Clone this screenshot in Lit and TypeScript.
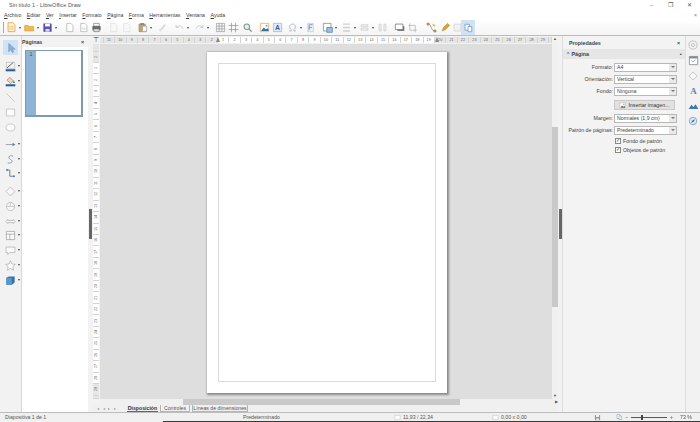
import { LitElement, html, css, svg } from "lit";
import { customElement } from "lit/decorators.js";

const O = "#e8a33d";

const ic: Record<string, any> = {
  new: svg`<path d="M3 1h7l3 3v10H3z" fill="#fdf3e0" stroke="${O}" stroke-width="1.2"/><path d="M5 7h6M5 10h6" stroke="${O}"/>`,
  open: svg`<path d="M1 5h5l1 1.500h7V13H1z" fill="#eeb95b" stroke="#d9a03f"/>`,
  save: svg`<path d="M2 2h11l1 1v11H2z" fill="#5a4fa8"/><path d="M4.500 2.500h7v4h-7z" fill="#fff"/><path d="M5 10h6v4H5z" fill="#d9d6ee"/>`,
  disk: svg`<path d="M2 2h11l1 1v11H2z" fill="#999"/><path d="M4.500 2.500h7v4h-7z" fill="#fff"/><path d="M5 10h6v4H5z" fill="#eee"/>`,
  doc: svg`<path d="M4 2h6l3 3v9H4z" fill="#fff" stroke="#aaa"/>`,
  doc2: svg`<path d="M4 2h6l3 3v9H4z" fill="#fff" stroke="#aaa"/><path d="M6 8h5v3H6z" fill="#ddd"/>`,
  print: svg`<path d="M4 2h8v4H4z" fill="#fff" stroke="#777"/><path d="M2 6h12v6H2z" fill="#666"/><path d="M4 10h8v4H4z" fill="#ddd" stroke="#777"/>`,
  faint: svg`<path d="M4 2h6l3 3v9H4z" fill="#f8f8f8" stroke="#ddd"/>`,
  paste: svg`<path d="M3 3h9v11H3z" fill="#c9a263" stroke="#a8854d"/><path d="M8 6h6v8H8z" fill="#fff" stroke="#999"/><path d="M5 1.500h5v3H5z" fill="#888"/>`,
  brush: svg`<path d="M4 13l8-9" stroke="#ddd" stroke-width="3"/>`,
  undo: svg`<path d="M3 4v4h4M3.500 8c3-4 8-3 9.500 2" fill="none" stroke="#c5cdd6" stroke-width="1.300"/>`,
  redo: svg`<path d="M13 4v4H9M12.500 8c-3-4-8-3-9.500 2" fill="none" stroke="#c5cdd6" stroke-width="1.300"/>`,
  grid: svg`<path d="M2 2h12v12H2zM6 2v12M10 2v12M2 6h12M2 10h12" fill="#f4f4f4" stroke="#888" stroke-width=".8"/>`,
  hash: svg`<path d="M5 1v14M11 1v14M1 5h14M1 11h14" fill="none" stroke="#8a8a8a"/>`,
  zoom: svg`<circle cx="7" cy="7" r="4" fill="#e4eef2" stroke="#7f9a8f" stroke-width="1.500"/><path d="M10 10l4 4" stroke="#888" stroke-width="2"/>`,
  image: svg`<path d="M2 2h12v12H2z" fill="#fff" stroke="${O}"/><path d="M3 13l4-5 3 3 2-2 2 2v2H3z" fill="#2f6fae"/><circle cx="11" cy="5.500" r="1.500" fill="#79a8d0"/>`,
  text: svg`<path d="M2 2h12v12H2z" fill="#e4ebf6" stroke="#9bb0cf"/><text x="8" y="12" text-anchor="middle" font-size="10" font-family="Liberation Sans" fill="#2f5da0" font-weight="bold">A</text>`,
  omega: svg`<path d="M3 13h3v-2c-4-3-2-8 2-8s6 5 2 8v2h3" fill="none" stroke="#a9b4be" stroke-width="1.300"/>`,
  font: svg`<path d="M4 2h8v12H4z" fill="#eef2f8" stroke="#b8c6da"/><path d="M6 4h5M6 4v8M6 8h4" stroke="#6d8cb8" stroke-width="1.300" fill="none"/>`,
  transform: svg`<path d="M2 2h11v11H2z" fill="#fff" stroke="#777"/><path d="M7 8h8v7H7z" fill="#9cc0e0" stroke="#3e76ad"/>`,
  align: svg`<path d="M3 3h10M3 8h10M3 13h10" stroke="#d0d0d0" stroke-width="2"/>`,
  arrange: svg`<path d="M3 4h10v3H3zM3 9h10v3H3z" fill="#eee" stroke="#ccc"/>`,
  dist: svg`<path d="M3 3h3v10H3zM10 3h3v10h-3z" fill="#eee" stroke="#ccc"/>`,
  shadow: svg`<path d="M5 6h10v7H5z" fill="#777"/><path d="M2 3h11v8H2z" fill="#fff" stroke="#666"/>`,
  crop: svg`<path d="M4 2v10h10M2 5h10v10" fill="none" stroke="#bbb" stroke-width="1.300"/>`,
  points: svg`<path d="M3 3c6 0 3 10 10 10" fill="none" stroke="#777"/><path d="M1.500 1.500h3v3h-3zM11.500 11.500h3v3h-3z" fill="#e5b13f" stroke="#555" stroke-width=".6"/><path d="M11 2l3 3-2 2-3-3z" fill="#e0c27a"/>`,
  glue: svg`<path d="M3 13l2-5 6-6 3 3-6 6z" fill="#e0a02e" stroke="#b67f1c" stroke-width=".7"/>`,
  extr: svg`<path d="M3 3h10v10H3z" fill="#f2f2f2" stroke="#ccc"/>`,
  active: svg`<path d="M4 3h6v8H4z" fill="#fff" stroke="#6b93bd"/><path d="M8 6h5v7H8z" fill="#fff" stroke="#6b93bd"/>`,
  select: svg`<path d="M5 2v11l3-3 2 4 1.500-.8-2-3.700h4z" fill="#8fb3d6" stroke="#5f8ab5" stroke-width=".7"/>`,
  lineColor: svg`<path d="M3 10l9-8" stroke="#555" stroke-width="1.300"/><path d="M2 2h12v9H2z" fill="none" stroke="#999" stroke-width=".6"/><path d="M1 12h14v3H1z" fill="#1f5fa5"/>`,
  fill: svg`<path d="M7 2l5 5-4 4-5-5z" fill="#f3d9b0" stroke="#a67"/><path d="M13 6l1.500 4h-3z" fill="#3e8a5a"/><path d="M1 12h14v3H1z" fill="#1f5fa5"/>`,
  line: svg`<path d="M2 2l12 12" stroke="#c0c0c0" stroke-width="1.200"/>`,
  rect: svg`<path d="M2 3h12v10H2z" fill="#fdfdfd" stroke="#b5b5b5"/>`,
  ellipse: svg`<ellipse cx="8" cy="8" rx="6.500" ry="5" fill="#fdfdfd" stroke="#b5b5b5"/>`,
  arrow: svg`<path d="M1 8h11" stroke="#8b98aa" stroke-width="1.200"/><path d="M11 5.500l4 2.500-4 2.500z" fill="#5a7fae"/>`,
  curve: svg`<path d="M12 3c-7-2-8 3-4 5s3 6-4 5" fill="none" stroke="#7c98b8" stroke-width="1.300"/>`,
  conn: svg`<path d="M3 3h4v9h6" fill="none" stroke="#666" stroke-width="1.200"/><circle cx="3" cy="3" r="1.500" fill="#5a7fae"/><circle cx="13" cy="12" r="1.500" fill="#5a7fae"/>`,
  diamond: svg`<path d="M8 1.500l6.500 6.500L8 14.500 1.500 8z" fill="#f7f7f7" stroke="#aaa"/>`,
  symbol: svg`<circle cx="8" cy="8" r="6" fill="#f7f7f7" stroke="#aaa"/><path d="M3 8h10M8 3v5" stroke="#bbb"/>`,
  blockArrow: svg`<path d="M1 8l3-3v1.500h8V5l3 3-3 3V9.500H4V11z" fill="#f7f7f7" stroke="#aaa"/>`,
  flow: svg`<path d="M2 2h12v12H2zM2 6h12M7 6v8" fill="#fafafa" stroke="#999"/>`,
  callout: svg`<path d="M1.500 3h13v8H7l-3 3v-3H1.500z" fill="#fafafa" stroke="#aaa"/>`,
  star: svg`<path d="M8 1l2.200 4.800 5 .6-3.700 3.400 1 5L8 12.300 3.500 14.800l1-5L.8 6.400l5-.6z" fill="#fafafa" stroke="#aaa"/>`,
  cube: svg`<path d="M2 4l4-2h8v9l-4 3H2z" fill="#3270ab"/><path d="M2 4h8v10H2z" fill="#5b96cc"/>`,
  gear: svg`<circle cx="8" cy="8" r="6.500" fill="none" stroke="#aaa"/><circle cx="8" cy="8" r="2.500" fill="none" stroke="#aaa"/>`,
  props: svg`<path d="M2 2h12v12H2z" fill="#fff" stroke="#777"/><path d="M2 2h12v3H2z" fill="#888"/><path d="M5 8l2 2 4-3" fill="none" stroke="#5c8fc2"/>`,
  tabA: svg`<text x="8" y="13" text-anchor="middle" font-size="13" font-family="Liberation Serif" font-weight="bold" fill="#5d7fa8">A</text>`,
  tabImg: svg`<path d="M1 13l4-6 3 3 3-4 4 7z" fill="#3f79b0"/>`,
  tabNav: svg`<circle cx="8" cy="8" r="6" fill="#dbe6f3" stroke="#5b86b6"/><path d="M5 11l2-4 4-2-2 4z" fill="#3b6aa8"/>`,
};

const I = (n: string, s = 12) =>
  html`<svg class="i" width=${s} height=${s} viewBox="0 0 16 16">${ic[n]}</svg>`;

type T = [string, number, boolean?];
// [icon, slot width, has dropdown]
const tools: T[] = [
  ["new", 18, true], ["open", 18, true], ["save", 22, true], ["doc", 14], ["doc2", 13], ["print", 17],
  ["faint", 13], ["faint", 16], ["paste", 20, true], ["brush", 17], ["undo", 20, true], ["redo", 21, true],
  ["grid", 13], ["hash", 14], ["zoom", 17], ["image", 13], ["text", 15], ["omega", 18, true], ["font", 17],
  ["transform", 19, true], ["align", 18, true], ["arrange", 18, true], ["dist", 17], ["shadow", 13], ["crop", 19],
  ["points", 14], ["glue", 12], ["extr", 9],
];

const left: [string, boolean, number][] = [
  ["lineColor", true, 3], ["fill", true, 4], ["line", false, 3], ["rect", false, 3], ["ellipse", false, 5],
  ["arrow", true, 3], ["curve", true, 2], ["conn", true, 6], ["diamond", true, 3], ["symbol", true, 3],
  ["blockArrow", true, 2], ["flow", true, 3], ["callout", true, 3], ["star", true, 3], ["cube", true, 3],
];

const fields: [string, string][] = [
  ["Formato:", "A4"], ["Orientación:", "Vertical"], ["Fondo:", "Ninguna"],
];
const fields2: [string, string][] = [
  ["Margen:", "Normales (1,9 cm)"], ["Patrón de páginas:", "Predeterminado"],
];

function cells(start: number, cm: number, total: number, onCm: number) {
  const out: { w: number; n: string; on: boolean }[] = [];
  let rem = start;
  const before: { w: number; n: string; on: boolean }[] = [];
  let k = 2;
  while (rem > 0) {
    const w = Math.min(cm, rem);
    before.unshift({ w, n: w === cm ? String(k) : "", on: false });
    rem -= w;
    k++;
  }
  out.push(...before);
  for (let i = 1; i <= onCm; i++) out.push({ w: cm, n: String(i), on: true });
  let used = start + cm * onCm;
  let j = onCm + 1;
  while (used < total) {
    const w = Math.min(cm, total - used);
    out.push({ w, n: w === cm ? String(j) : "", on: false });
    used += w;
    j++;
  }
  return out;
}

@customElement("app-root")
export class AppRoot extends LitElement {
  static styles = css`
    :host { display: block; width: 700px; height: 422px; overflow: hidden; background: #f2f2f2;
      font-family: "Liberation Sans", Arial, sans-serif; font-size: 5.5px; color: #444; }
    .app { display: grid; grid-template-rows: 10px 10px 16px 376px 9px 1px; height: 422px; filter: blur(.3px); }
    .title { background: #fff; display: flex; align-items: center; padding: 0 1px 0 9px; color: #555; font-size: 5.500px; }
    .title span:first-child { flex: 1; }
    .winbtn { width: 19px; display: flex; justify-content: center; color: #555; }
    .menu { background: #fff; display: flex; align-items: center; padding: 0 3px 0 4px; gap: 5.500px; color: #3d3d3d; font-size: 5.200px; }
    .menu u { text-decoration-thickness: .5px; }
    .menu .dc { margin-left: auto; color: #777; }
    .tb { background: linear-gradient(#fff, #f4f4f4); display: flex; align-items: center; padding-left: 3px; border-bottom: 1px solid #bdbdbd; box-sizing: border-box; }
    .tb .sep { width: 1px; height: 11px; background: #aaa; margin-right: 2px; flex: none; }
    .tslot { display: flex; align-items: center; flex: none; }
    .caret { width: 0; height: 0; border: 1.500px solid transparent; border-top: 2px solid #444; border-bottom: 0; margin-left: 2px; flex: none; }
    .act { width: 14px; height: 15px; background: #cfe3f5; display: flex; align-items: center; justify-content: center; }
    .i { display: block; flex: none; }

    .main { display: grid; grid-template-columns: 22px 66px 4px 466px 4px 123px 15px; min-height: 0; background: #f2f2f2; }
    .lt { display: flex; flex-direction: column; align-items: flex-start; padding: 4px 0 0 3px; background: #f2f2f2; border-right: 1px solid #d8d8d8; box-sizing: border-box; }
    .lact { width: 15px; height: 15px; background: #cfe3f5; display: flex; align-items: center; justify-content: center; margin-bottom: 5px; }
    .lrow { display: flex; align-items: center; height: 12px; padding-left: 2px; }
    .pages { display: flex; flex-direction: column; min-height: 0; background: #f2f2f2; }
    .ph { height: 11px; display: flex; align-items: center; justify-content: space-between; padding: 0 4px 0 0; font-weight: bold; color: #444; font-size: 5.300px; }
    .plist { flex: 1; background: #fff; padding: 3px 0 0 3px; }
    .thumb { width: 58px; height: 67px; box-sizing: border-box; background: #8db3d7; border: 1px solid #7e9ab0; border-right-width: 2px; border-bottom-width: 2px; display: flex; }
    .thumb .num { width: 10px; text-align: center; font-size: 4.500px; color: #244; padding-top: 1px; }
    .thumb .pg { flex: 1; background: #fff; }
    .split { display: flex; align-items: center; justify-content: center; }
    .grip { width: 3px; height: 30px; background: #666; }

    .work { display: grid; grid-template-columns: 8px 452px 6px; grid-template-rows: 8px 355px 6px 7px; min-height: 0; min-width: 0; }
    .corner { background: #f2f2f2; font-size: 7px; line-height: 7px; text-align: center; color: #333; }
    .rh { display: flex; background: #e6e6e6; margin: 1px 0; overflow: hidden; position: relative; }
    .rv { display: flex; flex-direction: column; background: #e6e6e6; margin: 0 1px; overflow: hidden; }
    .c { flex: none; box-sizing: border-box; display: flex; align-items: center; justify-content: center; font-size: 3.800px; color: #666; overflow: hidden; }
    .c.on { background: #fff; }
    .rh .c { border-right: .5px solid #d4d4d4; }
    .rv .c { border-bottom: .5px solid #d4d4d4; }
    .rv .c span { transform: rotate(-90deg); }
    .mk { position: absolute; top: 0; width: 0; height: 0; border: 2px solid transparent; border-bottom: 5px solid #888; border-top: 0; }
    .canvas { background: #dedede; padding: 8px 0 0 107px; min-height: 0; overflow: hidden; }
    .page { width: 240px; height: 341px; background: #fff; box-shadow: 1px 1px 2px 1px #8a8a8a; padding: 11px; box-sizing: border-box; }
    .margin { height: 319px; border: 1px solid #dadada; box-sizing: border-box; }
    .vs { background: #f0f0f0; display: flex; flex-direction: column; }
    .vs .t { height: 180px; background: #c9c9c9; margin-top: 83px; flex: none; }
    .ar { color: #555; font-size: 4px; line-height: 6px; text-align: center; flex: none; white-space: nowrap; }
    .vs .sp { flex: 1; }
    .hsw { grid-column: 2 / 4; background: #f0f0f0; display: flex; align-items: stretch; }
    .hsw .t { width: 277px; background: #c9c9c9; margin-left: 83px; }
    .hsw .sp { flex: 1; }
    .tabs { grid-column: 1 / 4; display: flex; align-items: stretch; background: #f0f0f0; padding-left: 5px; font-size: 5.200px; color: #555; }
    .nav { width: 30px; display: flex; gap: 3.500px; align-items: center; color: #999; font-size: 4px; }
    .tab { display: flex; align-items: center; justify-content: center; border: 1px solid #b5b5b5; border-top: 0; box-sizing: border-box; margin-right: 2px; white-space: nowrap; }
    .tab.on { border: 0; font-weight: bold; color: #333; border-bottom: 1px solid #666; }

    .side { display: flex; flex-direction: column; background: #f3f3f3; min-width: 0; border-left: 1px solid #ddd; }
    .sh { height: 13px; display: flex; align-items: center; justify-content: space-between; padding: 0 5px 0 6px; font-weight: bold; color: #3f3f3f; font-size: 5.300px; flex: none; }
    .deck { height: 10px; background: #e6e6e6; display: flex; align-items: center; justify-content: space-between; padding: 0 3px; font-weight: bold; color: #3f3f3f; font-size: 5.300px; flex: none; }
    .form { display: flex; flex-direction: column; padding-top: 2px; }
    .fr { display: grid; grid-template-columns: 50px 63px; column-gap: 1px; align-items: center; height: 12px; }
    .fr label { text-align: right; color: #444; font-size: 5.300px; white-space: nowrap; }
    .sel { height: 9px; background: #fff; border: 1px solid #b8b8b8; box-sizing: border-box; display: flex; align-items: center; justify-content: space-between; padding-left: 2px; font-size: 5.200px; color: #444; }
    .sel b { width: 7px; height: 7px; background: #e9e9e9; display: flex; align-items: center; justify-content: center; }
    .sel b i { width: 0; height: 0; border: 2px solid transparent; border-top: 2.500px solid #777; border-bottom: 0; }
    .btn { margin: 3px 0 2px 51px; width: 61px; height: 10px; background: #e1e1e1; border: 1px solid #c9c9c9; box-sizing: border-box; display: flex; align-items: center; justify-content: center; gap: 2px; font-size: 5.300px; color: #333; flex: none; }
    .ck { display: flex; align-items: center; gap: 2px; margin-left: 52px; height: 9px; font-size: 5.300px; color: #444; }
    .ck span.b { width: 6px; height: 6px; background: #fff; border: 1px solid #888; box-sizing: border-box; display: flex; align-items: center; justify-content: center; font-size: 5px; line-height: 5px; color: #333; }
    .rail { display: flex; flex-direction: column; align-items: center; background: #f2f2f2; padding-top: 1px; border-left: 1px solid #ddd; box-sizing: border-box; }
    .rail div { height: 15px; display: flex; align-items: center; justify-content: center; }
    .rail .r1 { margin-bottom: 1px; }

    .status { display: flex; align-items: center; background: #f0f0f0; border-top: 1px solid #bdbdbd; box-sizing: border-box; font-size: 5.200px; color: #555; }
    .status > div { display: flex; align-items: center; flex: none; height: 100%; white-space: nowrap; }
    .s1 { width: 236px; padding-left: 5px; box-sizing: border-box; }
    .s3 { padding-left: 7px; width: 158px; box-sizing: border-box; }
    .s4 { gap: 3px; }
    .sl { width: 36px; height: 1px; background: #555; position: relative; flex: none; }
    .kn { position: absolute; left: 10px; top: -2px; width: 2px; height: 5px; background: #444; }
    .strip { margin-left: 163px; background: #3a3a3a; }
  `;

  render() {
    const menu = [
      ["A", "rchivo"], ["E", "ditar"], ["V", "er"], ["I", "nsertar"], ["F", "ormato"], ["P", "ágina"],
      ["F", "orma"], ["H", "erramientas"], ["V", "entana"], ["A", "yuda"],
    ];
    const hc = cells(118, 11.43, 452, 19);
    const vc = cells(19, 11.48, 355, 28);
    return html`<div class="app">
      <div class="title"><span>Sin título 1 - LibreOffice Draw</span>
        <span class="winbtn">–</span><span class="winbtn">❐</span><span class="winbtn">✕</span></div>
      <div class="menu">${menu.map(([a, b]) => html`<span><u>${a}</u>${b}</span>`)}<span class="dc">×</span></div>
      <div class="tb"><span class="sep"></span>
        ${tools.map((t) => html`<div class="tslot" style="width:${t[1]}px">${I(t[0], 11)}${t[2] ? html`<span class="caret"></span>` : ""}</div>`)}
        <div class="act">${I("active", 12)}</div>
      </div>
      <div class="main">
        <div class="lt">
          <div class="lact">${I("select", 12)}</div>
          ${left.map(([n, c, mb]) => html`<div class="lrow" style="margin-bottom:${mb}px">${I(n, 11)}${c ? html`<span class="caret"></span>` : ""}</div>`)}
        </div>
        <div class="pages">
          <div class="ph"><span>Páginas</span><span>×</span></div>
          <div class="plist"><div class="thumb"><div class="num">1</div><div class="pg"></div></div></div>
        </div>
        <div class="split"><div class="grip"></div></div>
        <div class="work">
          <div class="corner">⊤</div>
          <div class="rh">${hc.map((c) => html`<div class="c ${c.on ? "on" : ""}" style="width:${c.w}px">${c.n}</div>`)}
            <span class="mk" style="left:116px"></span><span class="mk" style="left:335px"></span></div>
          <div class="ar">▲</div>
          <div class="rv">${vc.map((c) => html`<div class="c ${c.on ? "on" : ""}" style="height:${c.w}px"><span>${c.n}</span></div>`)}</div>
          <div class="canvas"><div class="page"><div class="margin"></div></div></div>
          <div class="vs"><div class="t"></div><div class="sp"></div><div class="ar">▼</div></div>
          <div class="corner"></div>
          <div class="hsw"><div class="t"></div><div class="sp"></div><div class="ar">▶</div></div>
          <div class="tabs">
            <div class="nav"><span>◂</span><span>◂</span><span>▸</span><span>▸</span></div>
            <div class="tab on" style="width:31px">Disposición</div>
            <div class="tab" style="width:30px">Controles</div>
            <div class="tab" style="width:56px">Líneas de dimensiones</div>
          </div>
        </div>
        <div class="split"><div class="grip"></div></div>
        <div class="side">
          <div class="sh"><span>Propiedades</span><span>×</span></div>
          <div class="deck"><span>⌃ Página</span><span>▪</span></div>
          <div class="form">
            ${fields.map(([l, v]) => html`<div class="fr"><label>${l}</label><div class="sel"><span>${v}</span><b><i></i></b></div></div>`)}
            <div class="btn">${I("image", 7)}<span>Insertar imagen...</span></div>
            ${fields2.map(([l, v]) => html`<div class="fr"><label>${l}</label><div class="sel"><span>${v}</span><b><i></i></b></div></div>`)}
            <div class="ck"><span class="b">✓</span><span>Fondo de patrón</span></div>
            <div class="ck"><span class="b">✓</span><span>Objetos de patrón</span></div>
          </div>
        </div>
        <div class="rail">
          <div class="r1">${I("gear", 10)}</div><div>${I("props", 11)}</div><div>${I("diamond", 10)}</div>
          <div>${I("tabA", 11)}</div><div>${I("tabImg", 11)}</div><div>${I("tabNav", 10)}</div>
        </div>
      </div>
      <div class="status">
        <div class="s1">Diapositiva 1 de 1</div>
        <div class="s3">Predeterminado</div>
        <div style="width:98px;gap:2px">${I("rect", 7)}<span>11,93 / 22,34</span></div>
        <div style="width:102px;gap:2px">${I("rect", 7)}<span>0,00 x 0,00</span></div>
        <div style="width:21px">${I("disk", 7)}</div>
        <div style="width:10px">${I("active", 8)}</div>
        <div class="s4"><span>−</span><div class="sl"><div class="kn"></div></div><span>+</span><span style="margin-left:4px">73 %</span></div>
      </div>
      <div class="strip"></div>
    </div>`;
  }
}
